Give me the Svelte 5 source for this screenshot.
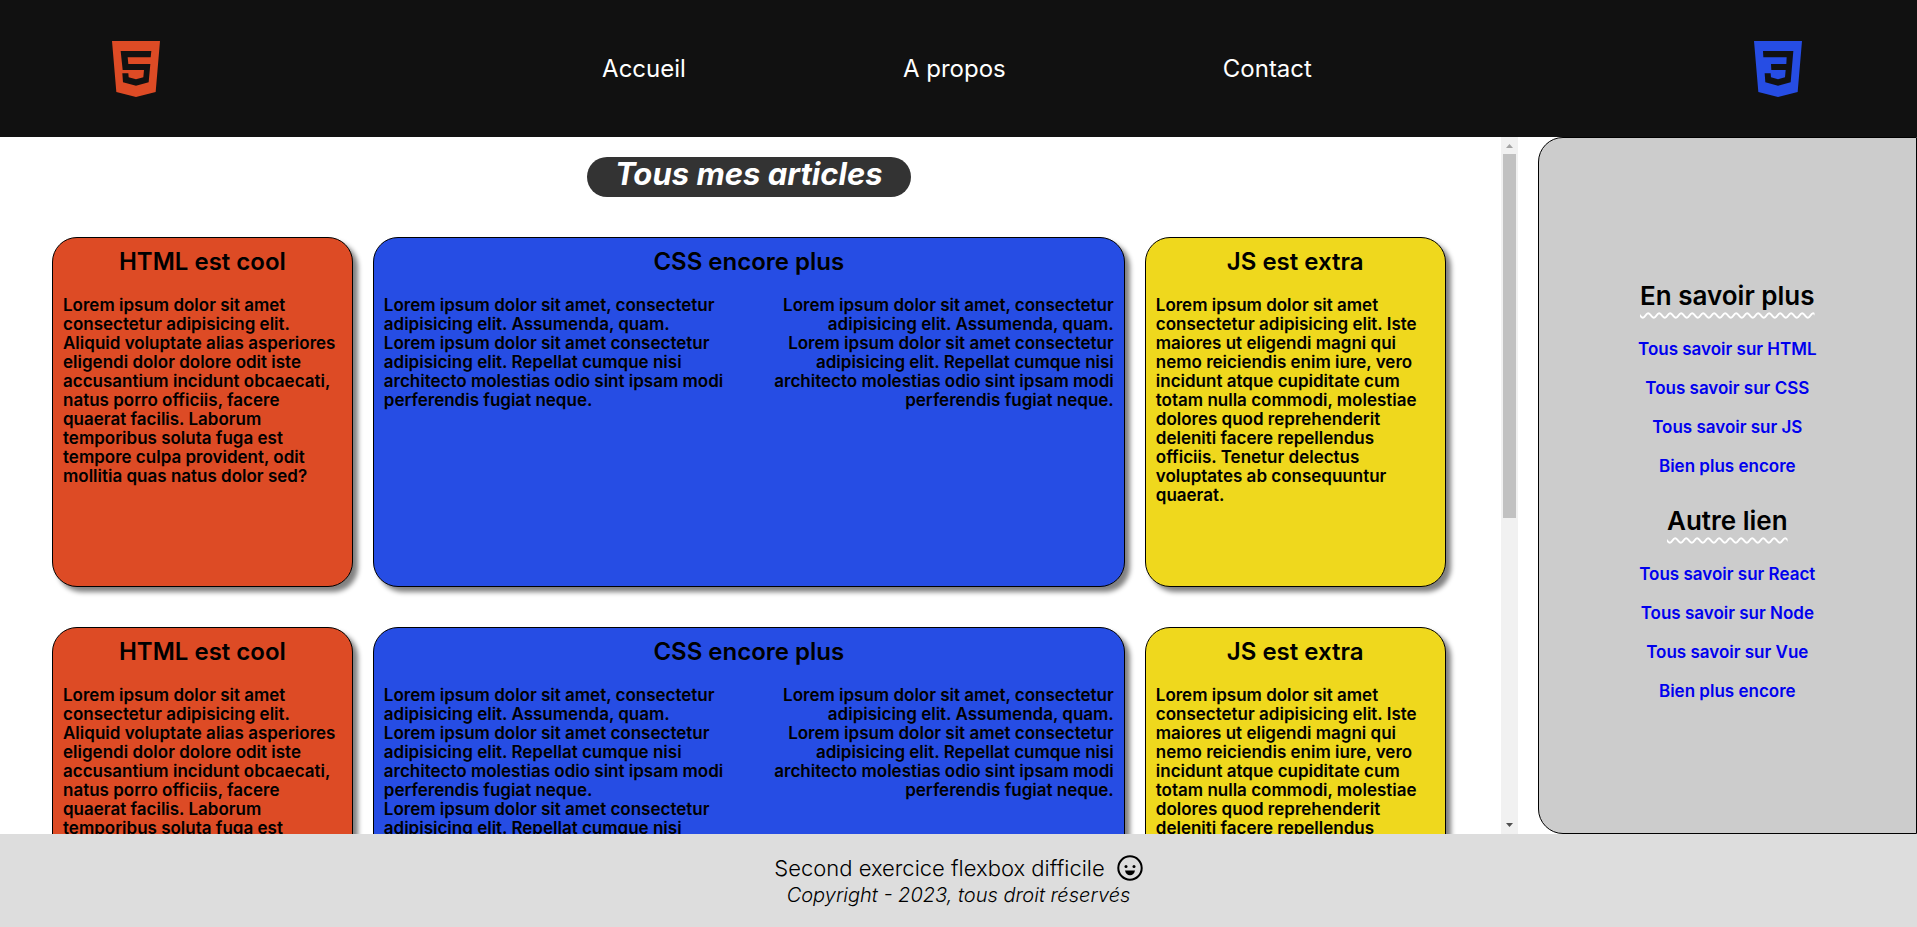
<script>
  import { onMount } from 'svelte';

  const navLinks = ['Accueil', 'A propos', 'Contact'];

  const html = `Lorem ipsum dolor sit amet
consectetur adipisicing elit.
Aliquid voluptate alias asperiores
eligendi dolor dolore odit iste
accusantium incidunt obcaecati,
natus porro officiis, facere
quaerat facilis. Laborum
temporibus soluta fuga est
tempore culpa provident, odit
mollitia quas natus dolor sed?`;

  const cssIntro = `Lorem ipsum dolor sit amet, consectetur
adipisicing elit. Assumenda, quam.`;

  const cssMore = `Lorem ipsum dolor sit amet consectetur
adipisicing elit. Repellat cumque nisi
architecto molestias odio sint ipsam modi
perferendis fugiat neque.`;

  const js = `Lorem ipsum dolor sit amet
consectetur adipisicing elit. Iste
maiores ut eligendi magni qui
nemo reiciendis enim iure, vero
incidunt atque cupiditate cum
totam nulla commodi, molestiae
dolores quod reprehenderit
deleniti facere repellendus
officiis. Tenetur delectus
voluptates ab consequuntur
quaerat.`;

  const rows = [
    { left: [cssIntro, cssMore], right: [cssIntro, cssMore] },
    { left: [cssIntro, cssMore, cssMore], right: [cssIntro, cssMore] },
    { left: [cssIntro, cssMore], right: [cssIntro, cssMore] }
  ];

  const groups = [
    { title: 'En savoir plus', links: ['Tous savoir sur HTML', 'Tous savoir sur CSS', 'Tous savoir sur JS', 'Bien plus encore'] },
    { title: 'Autre lien', links: ['Tous savoir sur React', 'Tous savoir sur Node', 'Tous savoir sur Vue', 'Bien plus encore'] }
  ];

  let list;
  let thumb = $state({ size: 50, top: 0 });

  function measure() {
    thumb = {
      size: (list.clientHeight / list.scrollHeight) * 100,
      top: (list.scrollTop / list.scrollHeight) * 100
    };
  }

  function scrollStep(amount) {
    list.scrollBy({ top: amount });
  }

  onMount(measure);
</script>

<svelte:window onresize={measure} />

<div class="page">
  <header>
    <svg class="logo html" viewBox="0 0 144 168" role="img" aria-label="HTML5">
      <path fill-rule="evenodd" d="M0 0H144L131 153L72 168L13 153ZM118 30H26L32 87H96L94 109L72 115L50 109L49 97H31L33 124L72 134L110 124L115 69H49L47 49H116Z" />
    </svg>
    <nav>
      {#each navLinks as link}
        <a href="#top">{link}</a>
      {/each}
    </nav>
    <svg class="logo css" viewBox="0 0 144 168" role="img" aria-label="CSS3">
      <path fill-rule="evenodd" d="M0 0H144L131 153L72 168L13 153ZM27 30H118L110 124L72 134L34 124L32 97H50L51 109L72 115L93 109L95 87H52L51 69H97L98 49H28Z" />
    </svg>
  </header>

  <div class="body">
    <div class="content">
      <main bind:this={list} onscroll={measure}>
        <h1>Tous mes articles</h1>
        {#each rows as row}
          <section class="row">
            <article class="card orange">
              <h2>HTML est cool</h2>
              <p>{html}</p>
            </article>
            <article class="card blue">
              <h2>CSS encore plus</h2>
              <div class="columns">
                <div>
                  {#each row.left as text}<p>{text}</p>{/each}
                </div>
                <div class="end">
                  {#each row.right as text}<p>{text}</p>{/each}
                </div>
              </div>
            </article>
            <article class="card yellow">
              <h2>JS est extra</h2>
              <p>{js}</p>
            </article>
          </section>
        {/each}
      </main>
      <div class="scrollbar">
        <button class="up" aria-label="Monter" onclick={() => scrollStep(-40)}>
          <svg viewBox="0 0 17 17"><path d="M5 11L8.500 7L12 11Z" /></svg>
        </button>
        <div class="track">
          <div class="thumb" style="height: {thumb.size}%; top: {thumb.top}%"></div>
        </div>
        <button class="down" aria-label="Descendre" onclick={() => scrollStep(40)}>
          <svg viewBox="0 0 17 17"><path d="M5 6L8.500 10L12 6Z" /></svg>
        </button>
      </div>
    </div>

    <aside>
      {#each groups as group}
        <h3>{group.title}</h3>
        <ul>
          {#each group.links as link}
            <li><a href="#top">{link}</a></li>
          {/each}
        </ul>
      {/each}
    </aside>
  </div>

  <footer>
    <p class="note">
      Second exercice flexbox difficile
      <svg viewBox="0 0 26 26" aria-hidden="true">
        <circle cx="13" cy="13" r="11.700" fill="none" stroke="#000" stroke-width="2" />
        <circle cx="9" cy="11.500" r="1.500" />
        <circle cx="17" cy="11.500" r="1.500" />
        <path d="M8 15.500H18C17.500 18.500 15.500 20.300 13 20.300S8.500 18.500 8 15.500Z" />
      </svg>
    </p>
    <p class="copy">Copyright - 2023, tous droit réservés</p>
  </footer>
</div>

<style>
  :global(body) {
    margin: 0;
  }

  .page {
    display: flex;
    flex-direction: column;
    height: 100vh;
    font-family: Inter, "Open Sans", sans-serif;
    color: #000;
    background: #fff;
  }

  h1, h2, h3, p, ul {
    margin: 0;
    padding: 0;
  }

  a {
    text-decoration: none;
  }

  header {
    display: flex;
    align-items: center;
    justify-content: space-between;
    flex: none;
    height: 137px;
    padding: 0 115px 0 112px;
    box-sizing: border-box;
    background: #111;
  }

  .logo {
    width: 48px;
    height: 56px;
  }

  .logo.html {
    fill: #dd4b25;
  }

  .logo.css {
    fill: #264de4;
  }

  nav {
    display: flex;
    justify-content: space-between;
    width: 42%;
  }

  nav a {
    color: #fff;
    font-size: 24px;
    line-height: 29px;
  }

  .body {
    display: grid;
    grid-template-columns: minmax(0, 4fr) minmax(0, 1fr);
    grid-template-rows: minmax(0, 1fr);
    gap: 20px;
    flex: 1;
    min-height: 0;
  }

  .content {
    display: flex;
  }

  main {
    flex: 1;
    min-width: 0;
    padding: 20px 55px 40px 52px;
    box-sizing: border-box;
    overflow-y: scroll;
    scrollbar-width: none;
  }

  h1 {
    width: fit-content;
    margin: 0 auto 40px;
    padding: 0 28px 6px;
    border-radius: 20px;
    background: #333;
    color: #fff;
    font-size: 31px;
    font-style: italic;
    font-weight: 700;
    line-height: 34px;
  }

  .row {
    display: grid;
    grid-template-columns: 2fr 5fr 2fr;
    gap: 20px;
    margin-bottom: 40px;
  }

  .row:last-child {
    margin-bottom: 0;
  }

  .card {
    height: 350px;
    min-width: 0;
    padding: 10px;
    box-sizing: border-box;
    border: 1px solid #000;
    border-radius: 25px;
    box-shadow: 5px 5px 5px gray;
    font-size: 17px;
    font-weight: 600;
    line-height: 19px;
  }

  .card p {
    white-space: pre;
  }

  .orange {
    background: #dd4b25;
  }

  .blue {
    background: #264de4;
  }

  .yellow {
    background: #efd81d;
  }

  h2 {
    margin-bottom: 20px;
    font-size: 24px;
    font-weight: 600;
    line-height: 28px;
    text-align: center;
  }

  .columns {
    display: flex;
    justify-content: space-between;
  }

  .end {
    text-align: right;
  }

  .scrollbar {
    display: flex;
    flex-direction: column;
    flex: none;
    width: 17px;
    background: #f1f1f1;
  }

  .scrollbar button {
    width: 17px;
    height: 17px;
    padding: 0;
    border: 0;
    background: none;
  }

  .scrollbar svg {
    display: block;
    width: 17px;
    height: 17px;
  }

  .up svg {
    fill: #a3a3a3;
  }

  .down svg {
    fill: #505050;
  }

  .track {
    position: relative;
    flex: 1;
  }

  .thumb {
    position: absolute;
    left: 2px;
    right: 2px;
    background: #c1c1c1;
  }

  aside {
    display: flex;
    flex-direction: column;
    align-items: center;
    justify-content: center;
    gap: 30px;
    padding-top: 11px;
    box-sizing: border-box;
    border: 1px solid #000;
    border-radius: 25px 0 0 25px;
    background: #ccc;
  }

  h3 {
    font-size: 26px;
    font-weight: 600;
    line-height: 29px;
    text-decoration: underline wavy #fff;
    text-decoration-thickness: 2px;
    text-underline-offset: 7px;
    text-decoration-skip-ink: none;
  }

  ul {
    display: flex;
    flex-direction: column;
    align-items: center;
    gap: 20px;
    list-style: none;
  }

  li {
    font-size: 17px;
    font-weight: 600;
    line-height: 19px;
  }

  li a {
    color: #00e;
  }

  footer {
    display: flex;
    flex-direction: column;
    align-items: center;
    justify-content: center;
    flex: none;
    height: 93px;
    background: #ddd;
    font-weight: 300;
  }

  .note {
    display: flex;
    align-items: center;
    gap: 12px;
    font-size: 22px;
    line-height: 28px;
  }

  .note svg {
    width: 26px;
    height: 26px;
  }

  .copy {
    font-size: 20px;
    font-style: italic;
    line-height: 26px;
  }
</style>
